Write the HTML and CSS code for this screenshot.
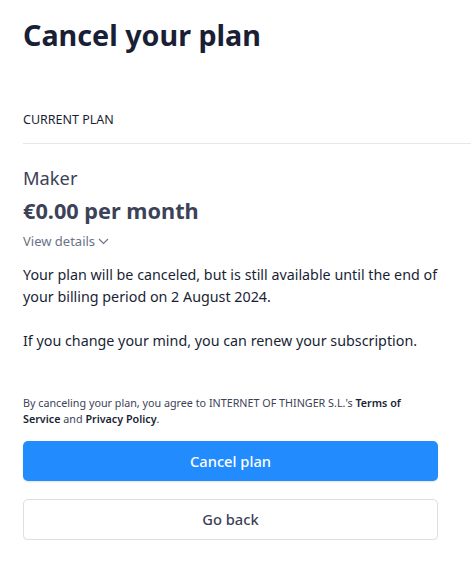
FILE: index.html
```html
<!DOCTYPE html>
<html>
<head>
<meta charset="utf-8">
<link rel="stylesheet" href="styles.css">
</head>
<body>
<main class="page">
  <h1 class="title">Cancel your plan</h1>
  <div class="section-label">CURRENT PLAN</div>
  <hr class="divider">
  <div class="plan-name">Maker</div>
  <div class="plan-price">€0.00 per month</div>
  <div class="details">View details
    <svg class="chev" width="11" height="7" viewBox="0 0 11 7"><path d="M1 1l4.5 4.5L10 1" fill="none" stroke="currentColor" stroke-width="1.1"/></svg>
  </div>
  <p class="text">Your plan will be canceled, but is still available until the end of your billing period on 2 August 2024.</p>
  <p class="text">If you change your mind, you can renew your subscription.</p>
  <p class="legal">By canceling your plan, you agree to INTERNET OF THINGER S.L.'s <span class="strong">Terms of Service</span> and <span class="strong">Privacy Policy</span>.</p>
  <div class="actions">
    <button class="btn btn-primary">Cancel plan</button>
    <button class="btn btn-secondary">Go back</button>
  </div>
</main>
</body>
</html>
```

FILE: styles.css
```css
html, body {
  margin: 0;
  padding: 0;
  background: #fff;
}
body {
  font-family: "Noto Sans", "Open Sans", sans-serif;
  color: #3c4257;
  overflow: hidden;
}
.page {
  padding: 12px 0 0 23px;
}
.title {
  margin: 0;
  font-size: 28.7px;
  line-height: 46px;
  font-weight: 700;
  color: #1a1f36;
}
.section-label {
  margin-top: 54px;
  font-size: 12.5px;
  line-height: 16px;
  color: #1a1f36;
}
.divider {
  border: 0;
  border-top: 1px solid #e3e8ee;
  margin: 15px 0 0 0;
}
.plan-name {
  margin-top: 21px;
  font-size: 18.3px;
  line-height: 26px;
  color: #3c4257;
}
.plan-price {
  margin-top: 6px;
  font-size: 21.7px;
  line-height: 28px;
  font-weight: 700;
  color: #3c4257;
}
.details {
  margin-top: 7px;
  font-size: 13px;
  line-height: 18px;
  color: #697386;
  display: flex;
  align-items: center;
  gap: 3px;
}
.chev {
  color: #697386;
}
.text {
  margin: 14px 0 0 0;
  width: 415px;
  font-size: 14.3px;
  line-height: 22px;
  color: #1a1f36;
}
.text + .text {
  margin-top: 22px;
}
.legal {
  margin: 43px 0 0 0;
  width: 415px;
  font-size: 10.75px;
  line-height: 16px;
  color: #3c4257;
}
.legal .strong {
  font-weight: 600;
  color: #1a1f36;
}
.actions {
  margin-top: 14px;
  width: 415px;
  display: flex;
  flex-direction: column;
  gap: 18px;
}
.btn {
  height: 40px;
  border-radius: 5px;
  font-family: inherit;
  font-size: 14.7px;
  font-weight: 500;
  cursor: pointer;
}
.btn-primary {
  background: #228cff;
  border: 0;
  color: #fff;
  box-shadow: 0 1px 2px rgba(0,0,0,0.12);
}
.btn-secondary {
  background: #fff;
  border: 1px solid #dcdfe4;
  color: #3c4257;
  height: 41px;
  padding-bottom: 3px;
  box-shadow: 0 1px 1px rgba(0,0,0,0.06);
}
```
